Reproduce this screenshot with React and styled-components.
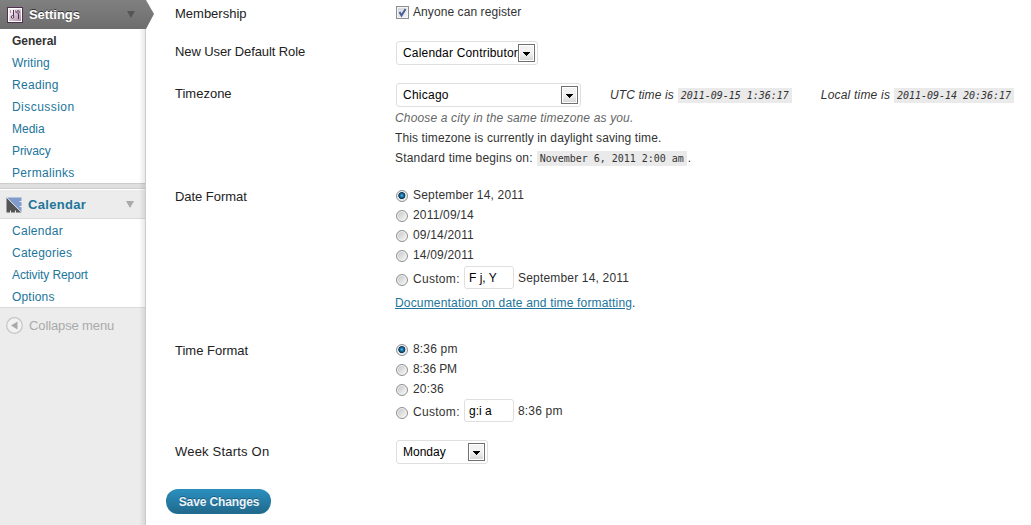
import React from "react";
import styled, { createGlobalStyle, css } from "styled-components";

const Global = createGlobalStyle`
  body { margin: 0; background: #fff; }
  * { box-sizing: border-box; }
`;

const Page = styled.div`
  display: flex;
  height: 525px;
  overflow: hidden;
  font: 12px/20px "Liberation Sans", Arial, sans-serif;
  color: #333;
`;

const Sidebar = styled.nav`
  position: relative;
  width: 146px;
  flex: none;
  background: #ececec;
  border-right: 1px solid #ccc;
`;

const EdgeShade = styled.div`
  position: absolute;
  top: 29px;
  bottom: 0;
  right: 0;
  width: 6px;
  background: linear-gradient(to right, rgba(0, 0, 0, 0), rgba(0, 0, 0, 0.09));
`;

const MenuHead = styled.div`
  position: relative;
  display: flex;
  align-items: center;
  height: ${(p) => (p.$current ? 29 : 30)}px;
  padding: 0 9px 0 6px;
  font-size: 13px;
  font-weight: bold;
  ${(p) =>
    p.$current
      ? css`
          width: 146px;
          color: #fff;
          background: linear-gradient(#808080, #6d6d6d);
          text-shadow: 0 -1px 0 #333;
        `
      : css`
          padding-top: 1px;
          color: #21759b;
          border-top: 1px solid #fff;
          border-bottom: 1px solid #dadada;
        `}
`;

const HeadText = styled.span`
  flex: 1;
  margin-left: 6px;
  letter-spacing: ${(p) => p.$ls || 0}px;
`;

const Pointer = styled.svg`
  position: absolute;
  left: 145px;
  top: 0;
  z-index: 1;
`;

const Caret = styled.span`
  border: 4px solid transparent;
  border-top: 7px solid ${(p) => p.$color};
  border-bottom: 0;
  margin-right: 2px;
`;

const Submenu = styled.ul`
  list-style: none;
  margin: 0;
  padding: 0;
  background: #fff;
`;

const SubItem = styled.li`
  height: 22px;
  padding-left: 12px;
  line-height: 25px;
  color: ${(p) => (p.$current ? "#333" : "#21759b")};
  font-weight: ${(p) => (p.$current ? "bold" : "normal")};
  letter-spacing: ${(p) => p.$ls || 0}px;
`;

const Separator = styled.div`
  height: 6px;
  background: #dfdfdf;
  border-top: 1px solid #ccc;
  border-bottom: 1px solid #ccc;
`;

const Collapse = styled.div`
  display: flex;
  align-items: center;
  gap: 6px;
  height: 36px;
  padding-left: 6px;
  border-top: 1px solid #dadada;
  font-size: 13px;
  letter-spacing: -0.12px;
  color: #aaa;
`;

const Content = styled.main`
  flex: 1;
  padding-left: 20px;
`;

const Row = styled.div`
  display: flex;
  height: ${(p) => p.$h}px;
  padding-left: 9px;
`;

const Label = styled.div`
  width: 220px;
  flex: none;
  padding-top: ${(p) => p.$top}px;
  color: #222;
  font-size: 13px;
  line-height: 20px;
  letter-spacing: ${(p) => p.$ls || 0}px;
`;

const Field = styled.div`
  padding-top: ${(p) => p.$top || 0}px;
  white-space: nowrap;
`;

const Line = styled.div`
  display: flex;
  align-items: center;
  height: ${(p) => p.$h || 20}px;
  margin-top: ${(p) => p.$mt || 0}px;
`;

const Text = styled.span`
  letter-spacing: ${(p) => p.$ls || 0}px;
  margin-left: ${(p) => p.$left || 0}px;
`;

const Hint = styled(Text)`
  font-style: italic;
  color: #666;
`;

const Time = styled(Text)`
  font-style: italic;
`;

const Code = styled.code`
  height: 15px;
  padding: 0 3px;
  margin: 1px 1px 0 4px;
  background: #eaeaea;
  font: 10px/16px "DejaVu Sans Mono", monospace;
  font-style: ${(p) => (p.$italic ? "italic" : "normal")};
  letter-spacing: -0.02px;
`;

const Link = styled.a`
  color: #21759b;
  text-decoration: underline;
  letter-spacing: ${(p) => p.$ls || 0}px;
`;

const SelectBox = styled.div`
  display: flex;
  align-items: center;
  width: ${(p) => p.$w}px;
  height: 24px;
  margin-left: 1px;
  padding: 0 2px 0 6px;
  border: 1px solid #dfdfdf;
  border-radius: 3px;
  color: #000;
`;

const SelectText = styled.span`
  flex: 1;
  min-width: 0;
  white-space: nowrap;
  letter-spacing: ${(p) => p.$ls || 0}px;
`;

const SelectButton = styled.span`
  display: flex;
  align-items: center;
  justify-content: center;
  width: 17px;
  height: 18px;
  flex: none;
  padding-top: 1px;
  border: 1px solid #707070;
  box-shadow: inset 0 0 0 1px #fff;
  background: linear-gradient(#f2f2f2 50%, #d4d4d4);
`;

const Input = styled.span`
  width: 50px;
  height: 23px;
  padding-left: 4px;
  border: 1px solid #dfdfdf;
  border-radius: 3px;
  line-height: 22px;
  color: #000;
`;

const CustomLabel = styled.span`
  width: 51px;
  padding-top: 2px;
  letter-spacing: 0.3px;
`;

const RadioDot = styled.span`
  width: 12px;
  height: 12px;
  flex: none;
  margin: ${(p) => p.$drop || 2}px 5px 0 1px;
  border: 1px solid #8e8f8f;
  border-radius: 50%;
  box-shadow: inset 0 0 0 1px #f4f4f4;
  background: ${(p) =>
    p.$on
      ? "radial-gradient(circle at 48% 45%, #5cc3ee 0, #1a78ab 20%, #0b3350 42%, #dfe6ea 52%)"
      : "linear-gradient(135deg, #c0c2c4, #f0f0f0 80%)"};
`;

const CheckBox = styled.span`
  display: flex;
  width: 13px;
  height: 13px;
  flex: none;
  margin: 1px 4px 0 1px;
  border: 1px solid #8e8f8f;
  box-shadow: inset 0 0 0 1px #f4f4f4;
  background: linear-gradient(135deg, #cfd3d8, #f6f6f6);
`;

const Button = styled.button`
  display: block;
  width: 105px;
  height: 25px;
  padding: 0 0 0 1px;
  border: 1px solid #298cba;
  border-color: #2a8bb9 #237ba5 #1f6f95;
  border-radius: 12px;
  background: linear-gradient(#2a8fbe, #21698c);
  color: #eaf2fa;
  font: bold 12px "Liberation Sans", Arial, sans-serif;
  text-shadow: 0 -1px 0 rgba(0, 0, 0, 0.3);
  letter-spacing: ${(p) => p.$ls || 0}px;
`;

const SettingsIcon = () => (
  <svg width="17" height="16" viewBox="0 0 17 16">
    <defs>
      <linearGradient id="panel" x2="1" y2="1">
        <stop offset="0.2" stopColor="#f3ebf2" />
        <stop offset="1" stopColor="#a98ba6" />
      </linearGradient>
    </defs>
    <rect x="1.5" y="0.5" width="15" height="15" fill="#fff" stroke="#54304f" />
    <rect x="3" y="2" width="12" height="12" fill="url(#panel)" />
    <path d="M7.500 3v6M12.500 7v5" stroke="#54304f" />
    <circle cx="6.500" cy="10" r="1.300" fill="#fff" stroke="#54304f" />
    <circle cx="12" cy="5" r="1.300" fill="#fff" stroke="#54304f" />
    <path d="M4.500 3v3M9.500 3v3" stroke="#a78ba3" />
  </svg>
);

const CalendarIcon = () => (
  <svg width="16" height="16" viewBox="0 0 16 16">
    <path d="M1 0.500H15.500V15Z" fill="#7f9bcb" />
    <path d="M0.500 0.500L15.500 15.500H0.500Z" fill="#555" />
    <path d="M0.500 0.500L15.500 15.500" stroke="#dde3ef" strokeWidth="0.800" />
    <path d="M4.500 13.500v2.500M9.500 13.500v2.500M13.500 4.500h2.500M13.500 9.500h2.500" stroke="#ececec" />
  </svg>
);

const CollapseIcon = () => (
  <svg width="17" height="17" viewBox="0 0 17 17">
    <circle cx="8.500" cy="8.500" r="7.800" fill="#f2f2f2" stroke="#c6c6c6" strokeWidth="1.200" />
    <path d="M11.500 4.500v8L5 8.500Z" fill="#aaa" />
  </svg>
);

const Select = ({ w, ls, children }) => (
  <SelectBox $w={w}>
    <SelectText $ls={ls}>{children}</SelectText>
    <SelectButton>
      <svg width="7" height="4" viewBox="0 0 7 4" shapeRendering="crispEdges">
        <path d="M0 0h7L3.500 4Z" fill="#000" />
      </svg>
    </SelectButton>
  </SelectBox>
);

const Radio = ({ on, ls = 0.18, children }) => (
  <Line>
    <RadioDot $on={on} />
    <Text $ls={ls}>{children}</Text>
  </Line>
);

const Custom = ({ value, preview, mt }) => (
  <Line $h={23} $mt={mt}>
    <RadioDot $drop={4} />
    <CustomLabel>Custom:</CustomLabel>
    <Input>{value}</Input>
    <Text $left={4} $ls={0.18}>{preview}</Text>
  </Line>
);

export default function App() {
  return (
    <Page>
      <Global />
      <Sidebar>
        <MenuHead $current>
          <SettingsIcon />
          <HeadText $ls={-0.05}>Settings</HeadText>
          <Caret $color="#555" />
          <Pointer width="10" height="29" viewBox="0 0 10 29">
            <defs>
              <linearGradient id="pointer" x2="0" y2="1">
                <stop offset="0" stopColor="#808080" />
                <stop offset="1" stopColor="#6d6d6d" />
              </linearGradient>
            </defs>
            <path d="M0 0H1L9 14L1 29H0Z" fill="url(#pointer)" />
          </Pointer>
        </MenuHead>
        <Submenu>
          <SubItem $current>General</SubItem>
          <SubItem $ls={0.1}>Writing</SubItem>
          <SubItem $ls={0.3}>Reading</SubItem>
          <SubItem $ls={0.45}>Discussion</SubItem>
          <SubItem>Media</SubItem>
          <SubItem $ls={-0.1}>Privacy</SubItem>
          <SubItem $ls={0.33}>Permalinks</SubItem>
        </Submenu>
        <Separator />
        <MenuHead>
          <CalendarIcon />
          <HeadText $ls={0.3}>Calendar</HeadText>
          <Caret $color="#aaa" />
        </MenuHead>
        <Submenu>
          <SubItem $ls={0.28}>Calendar</SubItem>
          <SubItem $ls={0.22}>Categories</SubItem>
          <SubItem $ls={-0.1}>Activity Report</SubItem>
          <SubItem $ls={0.18}>Options</SubItem>
        </Submenu>
        <Collapse>
          <CollapseIcon />
          <span>Collapse menu</span>
        </Collapse>
        <EdgeShade />
      </Sidebar>
      <Content>
        <Row $h={41}>
          <Label $top={4}>Membership</Label>
          <Field $top={2}>
            <Line>
              <CheckBox>
                <svg width="11" height="11" viewBox="0 0 11 11">
                  <path d="M2.500 5L4.500 8.500L8.500 2" stroke="#4a5f97" strokeWidth="2" fill="none" />
                </svg>
              </CheckBox>
              <Text $ls={0.08}>Anyone can register</Text>
            </Line>
          </Field>
        </Row>
        <Row $h={42}>
          <Label $top={1} $ls={-0.1}>New User Default Role</Label>
          <Field>
            <Select w={142} ls={0.18}>Calendar Contributor</Select>
          </Field>
        </Row>
        <Row $h={102}>
          <Label $top={1}>Timezone</Label>
          <Field>
            <Line $h={24}>
              <Select w={185} ls={0.25}>Chicago</Select>
              <Time $left={29} $ls={0.1}>UTC time is</Time>
              <Code $italic>2011-09-15 1:36:17</Code>
              <Time $left={28} $ls={0.2}>Local time is</Time>
              <Code $italic>2011-09-14 20:36:17</Code>
            </Line>
            <Line $mt={1}>
              <Hint $ls={0.15}>Choose a city in the same timezone as you.</Hint>
            </Line>
            <Line>
              <Text $ls={0.11}>This timezone is currently in daylight saving time.</Text>
            </Line>
            <Line>
              <Text $ls={0.18}>Standard time begins on:</Text>
              <Code>November 6, 2011 2:00 am</Code>.
            </Line>
          </Field>
        </Row>
        <Row $h={154}>
          <Label $top={2} $ls={-0.05}>Date Format</Label>
          <Field>
            <Radio on>September 14, 2011</Radio>
            <Radio>2011/09/14</Radio>
            <Radio>09/14/2011</Radio>
            <Radio>14/09/2011</Radio>
            <Custom mt={1} value="F j, Y" preview="September 14, 2011" />
            <Line $mt={4}>
              <Link $ls={0.17}>Documentation on date and time formatting</Link>.
            </Line>
          </Field>
        </Row>
        <Row $h={101}>
          <Label $top={2}>Time Format</Label>
          <Field>
            <Radio on>8:36 pm</Radio>
            <Radio ls={-0.1}>8:36 PM</Radio>
            <Radio>20:36</Radio>
            <Custom mt={0} value="g:i a" preview="8:36 pm" />
          </Field>
        </Row>
        <Row $h={49}>
          <Label $top={2} $ls={0.2}>Week Starts On</Label>
          <Field>
            <Select w={92}>Monday</Select>
          </Field>
        </Row>
        <Button $ls={-0.12}>Save Changes</Button>
      </Content>
    </Page>
  );
}
